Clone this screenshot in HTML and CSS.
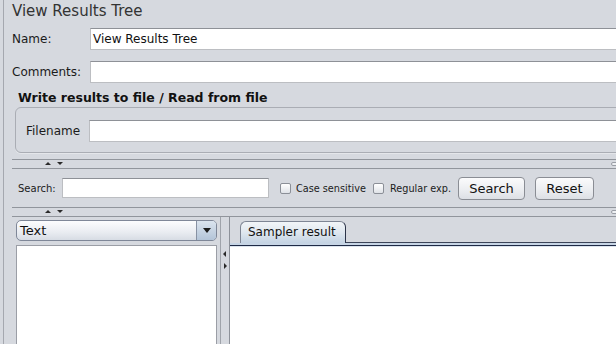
FILE: index.html
```html
<!DOCTYPE html>
<html>
<head>
<meta charset="utf-8">
<link rel="stylesheet" href="styles.css">
</head>
<body>
<div class="frame">
  <div class="title">View Results Tree</div>
  <div class="row">
    <div class="label">Name:</div>
    <div class="field">View Results Tree</div>
  </div>
  <div class="row last">
    <div class="label">Comments:</div>
    <div class="field"></div>
  </div>
  <div class="group-title">Write results to file / Read from file</div>
  <div class="group">
    <div class="glabel">Filename</div>
    <div class="field"></div>
  </div>
  <div class="hsplit">
    <span class="arr up"></span><span class="arr down"></span>
    <span class="grip"></span>
  </div>
  <div class="search-row">
    <div class="slabel">Search:</div>
    <div class="sfield"></div>
    <span class="check"></span><span class="ctext ct1">Case sensitive</span>
    <span class="check c2"></span><span class="ctext ct2">Regular exp.</span>
    <div class="btn b-search">Search</div>
    <div class="btn b-reset">Reset</div>
  </div>
  <div class="hsplit second">
    <span class="arr up"></span><span class="arr down"></span>
    <span class="grip"></span>
  </div>
  <div class="bottom">
    <div class="left">
      <div class="combo">
        <span class="combo-text">Text</span>
        <span class="combo-btn"><span class="tri-down"></span></span>
      </div>
      <div class="list"></div>
    </div>
    <div class="vsplit">
      <span class="arr left-a"></span>
      <span class="arr right-a"></span>
    </div>
    <div class="right">
      <div class="tabbar">
        <div class="tab">Sampler result</div>
        <div class="tabfill"></div>
      </div>
      <div class="band"></div>
      <div class="content"></div>
    </div>
  </div>
</div>
</body>
</html>
```

FILE: styles.css
```css
html, body {
  margin: 0;
  padding: 0;
  background: #d6d9df;
  overflow: hidden;
}
body {
  font-family: "DejaVu Sans", "Noto Sans", sans-serif;
  color: #1b1b1b;
  width: 616px;
  height: 344px;
}
.frame {
  margin-left: 3px;
  border-left: 1px solid #a5a8af;
  padding-left: 8px;
  height: 344px;
  box-sizing: border-box;
  display: flex;
  flex-direction: column;
  overflow: hidden;
}
.title {
  height: 22px;
  line-height: 22px;
  font-size: 15px;
  color: #333;
  margin-bottom: 6px;
}
.row {
  display: flex;
  align-items: center;
  height: 22px;
  margin-bottom: 11px;
  flex-shrink: 0;
}
.row.last { margin-bottom: 0; }
.label {
  width: 78px;
  font-size: 12px;
}
.field {
  flex: 1;
  height: 22px;
  box-sizing: border-box;
  background: #fff;
  border: 1px solid #bcbec2;
  border-top-color: #8e9197;
  margin-right: -20px;
  font-size: 12px;
  line-height: 20px;
  padding-left: 2px;
  color: #111;
}
.group-title {
  margin-top: 5px;
  font-size: 12.5px;
  font-weight: bold;
  line-height: 19px;
  padding-left: 6px;
  color: #111;
  flex-shrink: 0;
}
.group {
  margin-left: 3px;
  margin-right: -20px;
  border: 1px solid #aaadb4;
  border-radius: 6px;
  padding: 12px 0 10px 10px;
  display: flex;
  align-items: center;
  box-shadow: 0 1px 0 #e4e6ea;
  flex-shrink: 0;
}
.glabel {
  width: 63px;
  font-size: 12px;
}
.hsplit {
  margin-top: 6px;
  height: 10px;
  box-sizing: border-box;
  border-top: 1px solid #91959c;
  border-bottom: 1px solid #91959c;
  position: relative;
  flex-shrink: 0;
}
.hsplit.second {
  margin-top: 0;
}
.arr {
  position: absolute;
  width: 0;
  height: 0;
}
.arr.up {
  left: 33px;
  top: 2px;
  border-left: 3px solid transparent;
  border-right: 3px solid transparent;
  border-bottom: 3px solid #2a2a2a;
}
.arr.down {
  left: 45px;
  top: 2px;
  border-left: 3px solid transparent;
  border-right: 3px solid transparent;
  border-top: 3px solid #2a2a2a;
}
.grip {
  position: absolute;
  right: -2px;
  top: 2px;
  width: 5px;
  height: 2px;
  border: 1px solid #9a9ea6;
  border-radius: 2px;
  background: #eef0f3;
}
.search-row {
  height: 38px;
  display: flex;
  align-items: center;
  padding-left: 6px;
  font-size: 9.7px;
  flex-shrink: 0;
}
.slabel {
  width: 44px;
  font-size: 10px;
}
.sfield {
  width: 207px;
  height: 20px;
  box-sizing: border-box;
  background: #fff;
  border: 1px solid #bcbec2;
  border-top-color: #8e9197;
}
.check {
  width: 11px;
  height: 11px;
  box-sizing: border-box;
  border: 1px solid #8b8f97;
  border-radius: 2px;
  background: linear-gradient(#ffffff, #dfe2e7);
  margin-left: 11px;
  margin-right: 5px;
  flex-shrink: 0;
}
.check.c2 {
  margin-left: 0;
  margin-right: 6px;
}
.ctext {
  white-space: nowrap;
  overflow: hidden;
  flex-shrink: 0;
}
.ct1 { width: 77px; }
.ct2 { width: 68px; }
.btn {
  height: 23px;
  box-sizing: border-box;
  border: 1px solid #8a8d94;
  border-radius: 4px;
  background: linear-gradient(#fbfbfc, #eceef1 55%, #dde0e5);
  font-size: 13px;
  line-height: 21px;
  text-align: center;
  color: #111;
  flex-shrink: 0;
}
.b-search {
  width: 67px;
}
.b-reset {
  width: 59px;
  margin-left: 10px;
}
.bottom {
  flex: 1;
  display: flex;
  min-height: 0;
}
.left {
  width: 208px;
  box-sizing: border-box;
  padding: 3px 0 0 4px;
  display: flex;
  flex-direction: column;
}
.combo {
  width: 201px;
  height: 21px;
  box-sizing: border-box;
  border: 1px solid #7f8798;
  border-radius: 5px;
  background: linear-gradient(#fcfdfe, #e9ecf1 60%, #d7dce4);
  display: flex;
  align-items: center;
  overflow: hidden;
  flex-shrink: 0;
}
.combo-text {
  flex: 1;
  font-size: 13px;
  padding-left: 3px;
  color: #111;
}
.combo-btn {
  width: 19px;
  height: 19px;
  border-left: 1px solid #8791a3;
  background: linear-gradient(#dbe4ee, #b3c4d8);
  display: flex;
  align-items: center;
  justify-content: center;
}
.tri-down {
  width: 0;
  height: 0;
  border-left: 4px solid transparent;
  border-right: 4px solid transparent;
  border-top: 5px solid #1c1c1c;
}
.list {
  margin-top: 4px;
  width: 201px;
  flex: 1;
  box-sizing: border-box;
  background: #fff;
  border: 1px solid #9b9ea6;
  margin-bottom: -4px;
}
.vsplit {
  width: 10px;
  box-sizing: border-box;
  border-left: 1px solid #9fa3aa;
  border-right: 1px solid #8d9199;
  position: relative;
}
.arr.left-a {
  left: 2px;
  top: 34px;
  border-top: 3px solid transparent;
  border-bottom: 3px solid transparent;
  border-right: 3px solid #2a2a2a;
}
.arr.right-a {
  left: 3px;
  top: 46px;
  border-top: 3px solid transparent;
  border-bottom: 3px solid transparent;
  border-left: 3px solid #2a2a2a;
}
.right {
  flex: 1;
  display: flex;
  flex-direction: column;
  padding-top: 4px;
  min-width: 0;
}
.tabbar {
  display: flex;
  height: 22px;
  padding-left: 10px;
  flex-shrink: 0;
}
.tab {
  width: 106px;
  height: 22px;
  box-sizing: border-box;
  border: 1px solid #7e8594;
  border-right-color: #2c3449;
  border-bottom: none;
  border-radius: 6px 6px 0 0;
  background: linear-gradient(#f2f5f8, #dfe7ef 50%, #c4d3e3);
  font-size: 12px;
  line-height: 21px;
  padding-left: 7px;
  color: #111;
}
.tabfill {
  flex: 1;
  border-bottom: 1px solid #3c4559;
}
.band {
  height: 4px;
  background: linear-gradient(#c7d5e5 0, #c7d5e5 2px, #1f2a45 2px, #1f2a45 3px, #dbe4ee 3px);
  flex-shrink: 0;
}
.content {
  flex: 1;
  background: #fff;
}
```
